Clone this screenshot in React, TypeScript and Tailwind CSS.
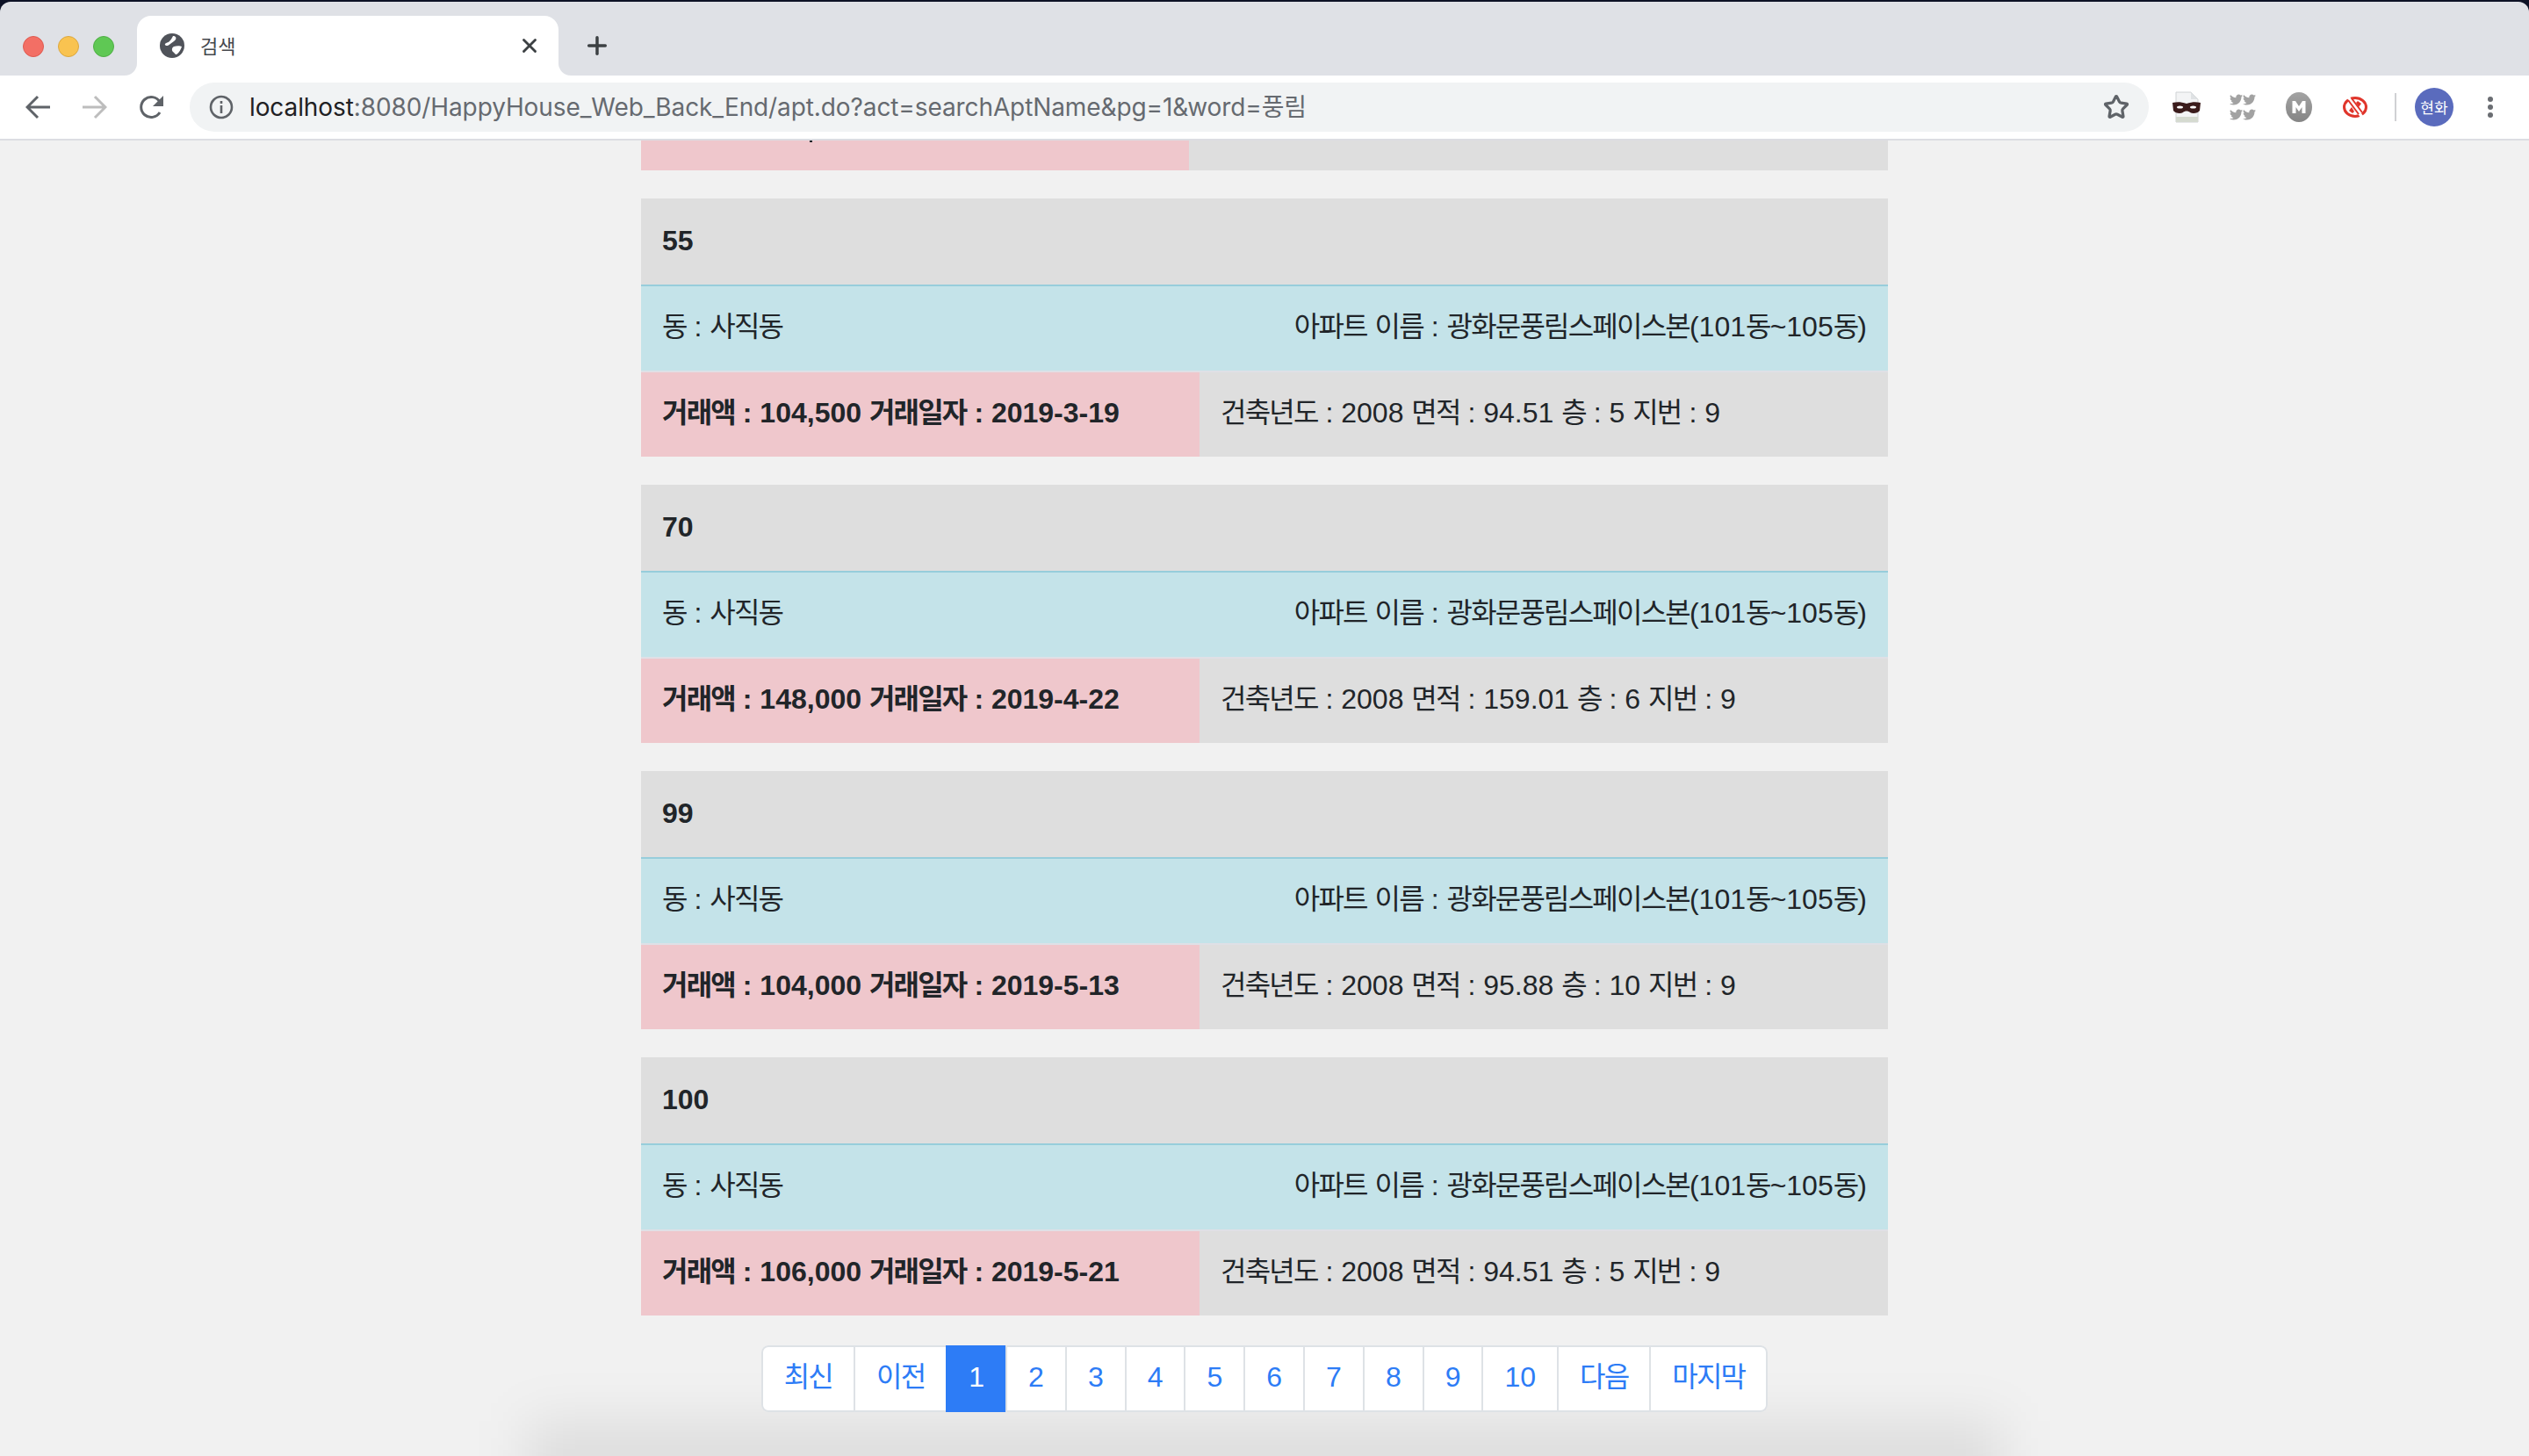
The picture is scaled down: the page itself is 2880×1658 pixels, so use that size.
import { FaTwitter } from 'react-icons/fa';
import { X, Plus, Star } from 'lucide-react';

const deals = [
  { id: '55', price: '104,500', date: '2019-3-19', area: '94.51', floor: '5' },
  { id: '70', price: '148,000', date: '2019-4-22', area: '159.01', floor: '6' },
  { id: '99', price: '104,000', date: '2019-5-13', area: '95.88', floor: '10' },
  { id: '100', price: '106,000', date: '2019-5-21', area: '94.51', floor: '5' },
];

const pages = ['최신', '이전', '1', '2', '3', '4', '5', '6', '7', '8', '9', '10', '다음', '마지막'];

const font = "font-['Liberation_Sans','Noto_Sans_CJK_KR',sans-serif]";

// the hangul in the shot is a bit narrower than Noto's, digits are fine
const Ko = ({ text }: { text: string }) => (
  <>
    {text.split(/([가-힣]+)/).map((part, i) =>
      /[가-힣]/.test(part) ? (
        <span key={i} className="tracking-[-1.8px]">{part}</span>
      ) : (
        part
      ),
    )}
  </>
);

const Globe = () => (
  <svg width="30" height="30" viewBox="0 0 30 30">
    <circle cx="15" cy="15" r="14" fill="#50535a" />
    <path d="M16 4c3 0 4 2 3 4s-4 3-6 5-5 3-6 1c-1-2 3-2 5-4s3-4 4-6z" fill="#fff" />
    <path d="M17 16c3-1 7-1 9 0-1 3-3 7-6 9-2 0-2-2-4-3-2-2-1-5 1-6z" fill="#fff" />
  </svg>
);

const Mask = () => (
  <svg width="34" height="36" viewBox="0 0 34 36">
    <path d="M5 1h17l8 8v26H5z" fill="#f3f4f5" stroke="#cfd2d4" strokeWidth="1" />
    <path d="M22 1v8h8z" fill="#dfe2e4" />
    <rect x="5" y="29" width="25" height="6" fill="#d5dad0" />
    <path d="M1 13c5-1 10-1 16 1 6-2 11-2 16-1l-1 9c-2 3-8 4-11 2-2-2-6-2-8 0-3 2-9 1-11-2z" fill="#3b1c1c" />
    <ellipse cx="9.5" cy="18" rx="3.5" ry="1.6" fill="#fff" />
    <ellipse cx="24.5" cy="18" rx="3.5" ry="1.6" fill="#fff" />
  </svg>
);

const MegaIcon = () => (
  <svg width="30" height="34" viewBox="0 0 30 34">
    <defs>
      <linearGradient id="mega" x1="0" y1="0" x2="0" y2="1">
        <stop offset="0" stopColor="#a3a3a3" />
        <stop offset="1" stopColor="#858585" />
      </linearGradient>
    </defs>
    <ellipse cx="15" cy="17" rx="15" ry="17" fill="url(#mega)" />
    <path d="M7.5 24V10h3.5l4 6 4-6h3.5v14h-4v-7l-3.5 5-3.5-5v7z" fill="#fff" />
  </svg>
);

const RedIcon = () => (
  <svg width="30" height="26" viewBox="0 0 30 26">
    <ellipse cx="15" cy="13" rx="12.5" ry="10.5" fill="none" stroke="#e0352b" strokeWidth="3" />
    <path d="M6 0l18 26" stroke="#fff" strokeWidth="3.5" />
    <path d="M7 5l12 16M11 3l12 16" stroke="#e0352b" strokeWidth="2" fill="none" />
    <path d="M8 17l3-4 3 5-2 2z" fill="#e0352b" />
    <path d="M22 9l-3 4-3-5 2-2z" fill="#e0352b" />
  </svg>
);

const ToolbarLeft = () => (
  <>
    <svg className="ml-[29px] shrink-0" width="28" height="28" viewBox="0 0 28 28" fill="none" stroke="#5f6368" strokeWidth="3">
      <path d="M28 14H3M14 2L2 14l12 12" />
    </svg>
    <svg className="ml-[37px] shrink-0" width="28" height="28" viewBox="0 0 28 28" fill="none" stroke="#bdbdbd" strokeWidth="3">
      <path d="M0 14h25M14 2l12 12-12 12" />
    </svg>
    <svg className="ml-[36px] shrink-0" width="30" height="30" viewBox="0 0 30 30" fill="none">
      <path d="M24 21a11.5 11.5 0 1 1 0-12" stroke="#5f6368" strokeWidth="3" />
      <path d="M28 2v12H16z" fill="#5f6368" />
    </svg>
  </>
);

const BrowserChrome = () => (
  <header className="shrink-0">
    <div className="flex h-[84px] items-end rounded-t-[12px] bg-[#dfe1e6]">
      <div className="flex h-[66px] items-center">
        <div className="ml-[26px] flex w-[130px] gap-4">
          <span className="h-6 w-6 rounded-full border border-[#de5a50] bg-[#f36f65]" />
          <span className="h-6 w-6 rounded-full border border-[#dba73f] bg-[#f9c350]" />
          <span className="h-6 w-6 rounded-full border border-[#4fae45] bg-[#5fc854]" />
        </div>
      </div>
      <div className="relative flex h-[68px] w-[480px] items-center rounded-t-[16px] bg-white pl-[25px] pr-[20px]">
        <span className="absolute bottom-0 left-[-14px] h-[14px] w-[14px] bg-white">
          <span className="block h-full w-full rounded-br-[14px] bg-[#dfe1e6]" />
        </span>
        <span className="absolute bottom-0 right-[-14px] h-[14px] w-[14px] bg-white">
          <span className="block h-full w-full rounded-bl-[14px] bg-[#dfe1e6]" />
        </span>
        <Globe />
        <span className="ml-[17px] -mt-[2px] flex-1 font-['Noto_Sans_CJK_KR',sans-serif] text-[22px] text-[#45484e]">검색</span>
        <X size={26} strokeWidth={2.6} color="#3c4043" />
      </div>
      <div className="flex h-[68px] items-center pl-[28px]">
        <Plus size={32} strokeWidth={2.6} color="#3c4043" />
      </div>
    </div>
    <div className="flex h-[74px] items-center border-b-2 border-[#dcdde2] bg-white">
      <ToolbarLeft />
      <div className="ml-[28px] flex h-[56px] w-[2231px] shrink-0 items-center rounded-full bg-[#f1f3f4] pl-[22px] pr-[22px]">
        <svg width="28" height="28" viewBox="0 0 28 28" fill="none" stroke="#5f6368" strokeWidth="2.6">
          <circle cx="14" cy="14" r="12" />
          <path d="M14 12v9M14 7v3" />
        </svg>
        <span className="ml-[18px] flex-1 whitespace-nowrap font-['Inter','Noto_Sans_CJK_KR',sans-serif] text-[28px] tracking-[-0.1px] text-[#666a70]">
          <span className="text-[#1f2023]">localhost</span>:8080/HappyHouse_Web_Back_End/apt.do?act=searchAptName&amp;pg=1&amp;word=풍림
        </span>
        <Star size={30} strokeWidth={2.6} color="#5f6368" />
      </div>
      <div className="ml-[26px] flex w-[34px] justify-center"><Mask /></div>
      <div className="ml-[32px] grid w-[30px] shrink-0 grid-cols-2 gap-y-[2px] text-[#a2a2a2]">
        <FaTwitter size={15} />
        <FaTwitter size={15} />
        <FaTwitter size={15} />
        <FaTwitter size={15} />
      </div>
      <div className="ml-[34px] flex w-[30px] justify-center"><MegaIcon /></div>
      <div className="ml-[34px] flex w-[30px] justify-center"><RedIcon /></div>
      <div className="ml-[30px] h-[32px] w-[2px] bg-[#d0d1d4]" />
      <div className="ml-[21px] flex h-[44px] w-[44px] items-center justify-center rounded-full bg-[#5a6bbd] font-['Noto_Sans_CJK_KR',sans-serif] text-[17px] text-white">현화</div>
      <div className="ml-[39px] flex flex-col gap-[3px]">
        <span className="h-[6px] w-[6px] rounded-full bg-[#6a6d72]" />
        <span className="h-[6px] w-[6px] rounded-full bg-[#6a6d72]" />
        <span className="h-[6px] w-[6px] rounded-full bg-[#6a6d72]" />
      </div>
    </div>
  </header>
);

const DealCard = ({ deal }: { deal: (typeof deals)[number] }) => (
  <section className="mt-8">
    <div className="h-[100px] border-b-2 border-[#97cddb] bg-[#dedede] px-6 py-6 font-bold">{deal.id}</div>
    <div className="flex h-[98px] justify-between border-b-2 border-[#dfe0e6] bg-[#c4e3e9] px-6 pt-[22px]">
      <span><Ko text="동 : 사직동" /></span>
      <span><Ko text="아파트 이름 : 광화문풍림스페이스본(101동~105동)" /></span>
    </div>
    <div className="flex h-[96px] bg-[#dedede]">
      <div className="w-[636px] bg-[#efc7cc] px-6 pt-[22px] font-bold">
        <Ko text={`거래액 : ${deal.price} 거래일자 : ${deal.date}`} />
      </div>
      <div className="flex-1 px-6 pt-[22px]">
        <Ko text={`건축년도 : 2008 면적 : ${deal.area} 층 : ${deal.floor} 지번 : 9`} />
      </div>
    </div>
  </section>
);

const Pagination = () => (
  <nav className="mt-[34px] flex justify-center">
    <ul className="flex overflow-hidden rounded-[8px]">
      {pages.map((page) => (
        <li
          key={page}
          className={
            page === '1'
              ? 'h-[76px] border-2 border-[#2d7cf6] bg-[#2d7cf6] px-6 pt-[10px] text-white -ml-[2px]'
              : 'h-[76px] border-2 border-[#dee2e6] bg-white px-6 pt-[10px] text-[#2d7cf6] -ml-[2px] first:ml-0 first:rounded-l-[8px] last:rounded-r-[8px]'
          }
        >
          <Ko text={page} />
        </li>
      ))}
    </ul>
  </nav>
);

export default function App() {
  return (
    <div className="flex h-[1658px] w-[2880px] flex-col overflow-hidden bg-[#0d1226] pt-[2px]">
      <BrowserChrome />
      <main className={`relative flex-1 overflow-hidden bg-[#f1f1f1] text-[32px] leading-[48px] text-[#212529] ${font}`}>
        <div className="mx-auto w-[1420px]">
          <div className="flex h-[34px] bg-[#dedede]">
            <div className="w-[624px] bg-[#efc7cc]">
              <span className="ml-[192px] block h-[2px] w-[3px] bg-[#212529]" />
            </div>
          </div>
          {deals.map((deal) => (
            <DealCard key={deal.id} deal={deal} />
          ))}
          <div className="relative z-10">
            <Pagination />
          </div>
        </div>
        <div className="absolute bottom-[-80px] left-[600px] right-[600px] h-[120px] bg-black/[0.08] blur-[30px]" />
      </main>
    </div>
  );
}
